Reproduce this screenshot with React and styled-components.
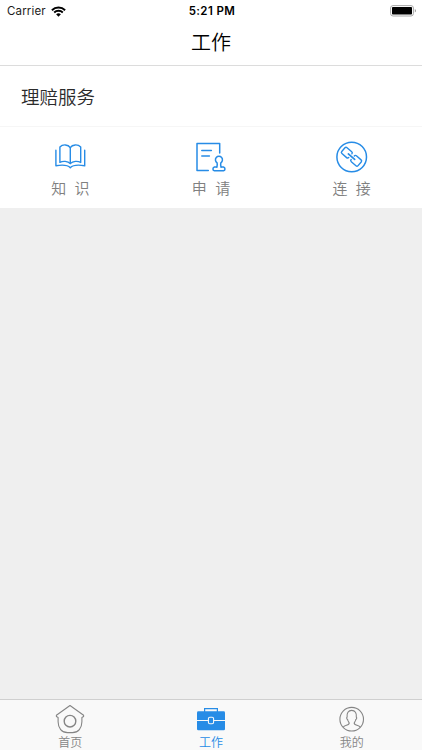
import React from 'react';
import styled, { createGlobalStyle } from 'styled-components';

const GlobalStyle = createGlobalStyle`
  * {
    box-sizing: border-box;
  }

  body {
    margin: 0;
    font-family: 'Noto Sans CJK SC', sans-serif;
    font-weight: 350;
  }
`;

const Screen = styled.div`
  display: flex;
  flex-direction: column;
  width: 422px;
  height: 750px;
  background: #efefef;
  overflow: hidden;
`;

const Header = styled.header`
  height: 66px;
  background: #fff;
  border-bottom: 1px solid #dcdcdc;
`;

const StatusBar = styled.div`
  display: grid;
  grid-template-columns: 1fr auto 1fr;
  align-items: center;
  height: 22px;
  padding: 0 5px 0 7px;
  font-family: Inter, sans-serif;
  font-size: 11.5px;
  font-weight: 400;
  line-height: 22px;
  color: #1c1c1c;
`;

const Carrier = styled.div`
  display: flex;
  align-items: center;
  gap: 5px;
  letter-spacing: 0.15px;
`;

const Time = styled.div`
  font-weight: 600;
  color: #000;
  letter-spacing: 0.4px;
`;

const Battery = styled.div`
  display: flex;
  justify-content: flex-end;
`;

const Title = styled.h1`
  margin: 0;
  font-size: 20px;
  font-weight: 350;
  line-height: 40px;
  text-align: center;
  color: #000;
`;

const Section = styled.section`
  height: 142px;
  background: #fff;
`;

const SectionTitle = styled.h2`
  height: 61px;
  margin: 0;
  padding-left: 21px;
  border-bottom: 1px solid #f6f6f6;
  font-size: 18.5px;
  font-weight: 350;
  line-height: 60px;
  color: #2b2b2b;
`;

const Services = styled.div`
  display: grid;
  grid-template-columns: repeat(3, 1fr);
`;

const Service = styled.div`
  display: flex;
  flex-direction: column;
  align-items: center;
  padding-top: 14px;
  color: #278ce6;
`;

const ServiceLabel = styled.span`
  margin-top: 4px;
  font-size: 15px;
  line-height: 22px;
  word-spacing: 5px;
  color: #808080;
`;

const TabBar = styled.nav`
  display: grid;
  grid-template-columns: repeat(3, 1fr);
  height: 51px;
  margin-top: auto;
  background: #f9f9f9;
  border-top: 1px solid #cfcfcf;
`;

const Tab = styled.div`
  display: flex;
  flex-direction: column;
  align-items: center;
  padding-top: 4px;
  font-size: 12px;
  line-height: 14px;
  color: ${(props) => (props.$active ? '#278ce6' : '#858585')};
`;

const WifiIcon = () => (
  <svg width="15" height="11" viewBox="0 0 15 11" fill="none" stroke="#000" strokeWidth="1.9">
    <path d="M.9 4.2a9.4 9.4 0 0 1 13.2 0" />
    <path d="M3.2 6.5a6.1 6.1 0 0 1 8.6 0" />
    <path d="M7.5 10.7 5.1 8.3a3.5 3.5 0 0 1 4.8 0z" fill="#000" stroke="none" />
  </svg>
);

const BatteryIcon = () => (
  <svg width="27" height="12" viewBox="0 0 27 12">
    <rect x=".6" y=".6" width="22.8" height="10.4" rx="2.4" fill="#fff" stroke="#a8a8a8" />
    <rect x="2" y="2" width="20" height="7.6" rx=".8" fill="#000" />
    <path d="M24.8 4.1c1.6.6 1.6 2.8 0 3.4z" fill="#999" />
  </svg>
);

const BookIcon = () => (
  <svg width="32" height="32" viewBox="0 0 32 32" fill="none" stroke="currentColor" strokeWidth="1.4" strokeLinejoin="round" strokeLinecap="round">
    <path d="M16.3 6.6C14.2 3.3 8.7 3 5.9 6v15.4c3-1.6 7.8-1.4 10.4 1.2 2.6-2.6 7.4-2.8 10.4-1.2V6C23.9 3 18.4 3.3 16.3 6.6z" />
    <path d="M16.3 6.6v16" />
    <path d="M1.9 9.2v15.6c5-.9 11.4-1.2 14.4 2 3-3.2 9.4-2.9 14.4-2V9.2" />
  </svg>
);

const ApplyIcon = () => (
  <svg width="32" height="32" viewBox="0 0 32 32" fill="none" stroke="currentColor" strokeWidth="1.5" strokeLinecap="round" strokeLinejoin="round">
    <path d="M24.7 12V2.4H2v27.1h11.3" />
    <path d="M6.8 9.5h9.6M6.8 15.1h7.6" />
    <path d="M21.8 26.1c.5-1.5.6-2.9.3-4.3a3.5 3.5 0 1 1 3.7 0c-.3 1.4-.2 2.8.3 4.3" />
    <path d="M21.8 26.1h-2.4a1.9 1.9 0 0 0 0 3.7h9.1a1.9 1.9 0 0 0 0-3.7h-2.4" />
  </svg>
);

const LinkIcon = () => (
  <svg width="32" height="32" viewBox="0 0 32 32" fill="none" stroke="currentColor" strokeWidth="1.5">
    <circle cx="15.7" cy="16" r="14.8" />
    <g transform="translate(15.5 15.7) rotate(41)" strokeWidth="1.4" strokeLinecap="round">
      <path d="M-1.6-2.4q0-1.5-1.5-1.5h-6.2q-1.5 0-1.5 1.5v4.8q0 1.5 1.5 1.5h6.2q1.5 0 1.5-1.5" />
      <path d="M1.6 2.4q0 1.5 1.5 1.5h6.2q1.5 0 1.5-1.5v-4.8q0-1.5-1.5-1.5h-6.2q-1.5 0-1.5 1.5" />
      <path d="M-4.2 0h8.4" strokeWidth="1.7" />
    </g>
  </svg>
);

const HomeIcon = () => (
  <svg width="30" height="31" viewBox="0 0 30 31" fill="none" stroke="currentColor" strokeWidth="1.1" strokeLinejoin="round">
    <path d="M15 1.5 28.6 11.2v1.3l-1.7 1v4.3c0 6.2-3.7 10.8-9.4 10.8h-5c-5.7 0-9.4-4.6-9.4-10.8v-4.3l-1.7-1v-1.3z" />
    <circle cx="15" cy="17.2" r="5.8" strokeWidth="1.4" />
  </svg>
);

const WorkIcon = () => (
  <svg width="30" height="31" viewBox="0 0 30 31">
    <path d="M8.6 8V4.7h12.8V8" fill="none" stroke="currentColor" strokeWidth="1.2" />
    <rect x="1" y="7.3" width="28" height="19" rx="1.3" fill="currentColor" />
    <path d="M1 16.5h28" stroke="#f9f9f9" strokeWidth="1" />
    <rect x="12.4" y="13.2" width="5.2" height="6.6" rx="1.5" fill="currentColor" stroke="#f9f9f9" strokeWidth="1.1" />
  </svg>
);

const MineIcon = () => (
  <svg width="30" height="31" viewBox="0 0 30 31" fill="none" stroke="currentColor" strokeWidth="1.1">
    <circle cx="14.7" cy="15.2" r="11.8" />
    <path d="M6.2 23.2c.9-1.6 4.1-1.9 5.4-2.9 1-.8.5-1.9-.2-2.8-.5-.6-.7-1.3-.8-2-.9-.3-1.2-2-.5-2.5-.5-3.9 1.2-6.6 4.6-6.6s5.1 2.7 4.6 6.6c.7.5.4 2.2-.5 2.5-.1.7-.3 1.4-.8 2-.7.9-1.2 2-.2 2.8 1.3 1 4.5 1.3 5.4 2.9" />
  </svg>
);

const services = [
  { label: '知 识', Icon: BookIcon },
  { label: '申 请', Icon: ApplyIcon },
  { label: '连 接', Icon: LinkIcon },
];

const tabs = [
  { label: '首页', Icon: HomeIcon },
  { label: '工作', Icon: WorkIcon, active: true },
  { label: '我的', Icon: MineIcon },
];

const App = () => {
  return (
    <Screen>
      <GlobalStyle />
      <Header>
        <StatusBar>
          <Carrier>
            Carrier
            <WifiIcon />
          </Carrier>
          <Time>5:21 PM</Time>
          <Battery>
            <BatteryIcon />
          </Battery>
        </StatusBar>
        <Title>工作</Title>
      </Header>
      <Section>
        <SectionTitle>理赔服务</SectionTitle>
        <Services>
          {services.map(({ label, Icon }) => (
            <Service key={label}>
              <Icon />
              <ServiceLabel>{label}</ServiceLabel>
            </Service>
          ))}
        </Services>
      </Section>
      <TabBar>
        {tabs.map(({ label, Icon, active }) => (
          <Tab key={label} $active={active}>
            <Icon />
            {label}
          </Tab>
        ))}
      </TabBar>
    </Screen>
  );
};

export default App;
